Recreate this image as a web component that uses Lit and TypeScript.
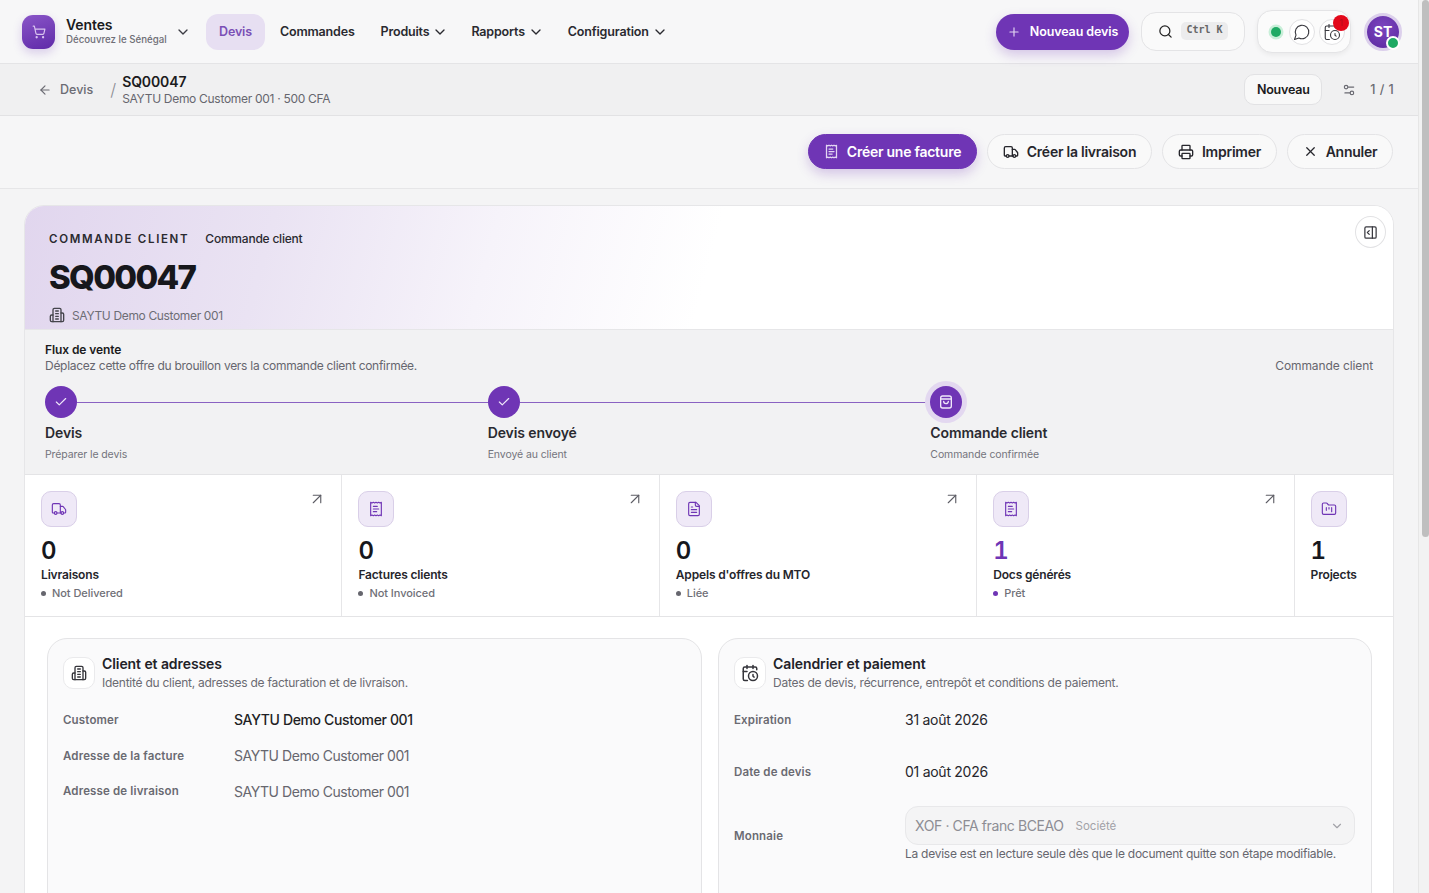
import { LitElement, html, css, svg } from "lit";
import { customElement } from "lit/decorators.js";

const ICONS: Record<string, unknown> = {
  cart: svg`<circle cx="8" cy="21" r="1"/><circle cx="19" cy="21" r="1"/><path d="M2.05 2.05h2l2.66 12.42a2 2 0 0 0 2 1.58h9.78a2 2 0 0 0 1.95-1.57l1.65-7.43H5.12"/>`,
  chevron: svg`<path d="m6 9 6 6 6-6"/>`,
  plus: svg`<path d="M5 12h14"/><path d="M12 5v14"/>`,
  search: svg`<circle cx="11" cy="11" r="8"/><path d="m21 21-4.3-4.3"/>`,
  message: svg`<path d="M7.9 20A9 9 0 1 0 4 16.1L2 22Z"/>`,
  calclock: svg`<path d="M21 7.5V6a2 2 0 0 0-2-2H5a2 2 0 0 0-2 2v14a2 2 0 0 0 2 2h3.5"/><path d="M16 2v4"/><path d="M8 2v4"/><path d="M3 10h5"/><path d="M17.5 17.5 16 16.3V14"/><circle cx="16" cy="16" r="6"/>`,
  back: svg`<path d="m12 19-7-7 7-7"/><path d="M19 12H5"/>`,
  sliders: svg`<path d="M20 7h-9"/><path d="M14 17H5"/><circle cx="17" cy="17" r="3"/><circle cx="7" cy="7" r="3"/>`,
  receipt: svg`<path d="M4 2v20l2-1 2 1 2-1 2 1 2-1 2 1 2-1 2 1V2l-2 1-2-1-2 1-2-1-2 1-2-1-2 1Z"/><path d="M14 8H8"/><path d="M16 12H8"/><path d="M13 16H8"/>`,
  truck: svg`<path d="M14 18V6a2 2 0 0 0-2-2H4a2 2 0 0 0-2 2v11a1 1 0 0 0 1 1h2"/><path d="M15 18H9"/><path d="M19 18h2a1 1 0 0 0 1-1v-3.65a1 1 0 0 0-.22-.624l-3.48-4.35A1 1 0 0 0 17.52 8H14"/><circle cx="17" cy="18" r="2"/><circle cx="7" cy="18" r="2"/>`,
  printer: svg`<path d="M6 18H4a2 2 0 0 1-2-2v-5a2 2 0 0 1 2-2h16a2 2 0 0 1 2 2v5a2 2 0 0 1-2 2h-2"/><path d="M6 9V3a1 1 0 0 1 1-1h10a1 1 0 0 1 1 1v6"/><rect x="6" y="14" width="12" height="8" rx="1"/>`,
  x: svg`<path d="M18 6 6 18"/><path d="m6 6 12 12"/>`,
  panel: svg`<rect x="3" y="3" width="18" height="18" rx="2"/><path d="M15 3v18"/><path d="m10 15-3-3 3-3"/>`,
  building: svg`<path d="M6 22V4a2 2 0 0 1 2-2h8a2 2 0 0 1 2 2v18Z"/><path d="M6 12H4a2 2 0 0 0-2 2v6a2 2 0 0 0 2 2h2"/><path d="M18 9h2a2 2 0 0 1 2 2v9a2 2 0 0 1-2 2h-2"/><path d="M10 6h4"/><path d="M10 10h4"/><path d="M10 14h4"/><path d="M10 18h4"/>`,
  check: svg`<path d="M20 6 9 17l-5-5"/>`,
  bag: svg`<rect x="4" y="3" width="16" height="18" rx="3"/><path d="M4 7.5h16"/><path d="M8.5 11a3.5 3.5 0 0 0 7 0"/>`,
  arrow: svg`<path d="M7 7h10v10"/><path d="M7 17 17 7"/>`,
  file: svg`<path d="M15 2H6a2 2 0 0 0-2 2v16a2 2 0 0 0 2 2h12a2 2 0 0 0 2-2V7Z"/><path d="M14 2v4a2 2 0 0 0 2 2h4"/><path d="M10 9H8"/><path d="M16 13H8"/><path d="M16 17H8"/>`,
  folder: svg`<path d="M4 20h16a2 2 0 0 0 2-2V8a2 2 0 0 0-2-2h-7.93a2 2 0 0 1-1.66-.9l-.82-1.2A2 2 0 0 0 7.93 3H4a2 2 0 0 0-2 2v13c0 1.1.9 2 2 2Z"/><path d="M8 10v4"/><path d="M12 10v2"/><path d="M16 10v6"/>`,
};

const ic = (name: string, cls = "i16") =>
  html`<svg class=${cls} viewBox="0 0 24 24" fill="none" stroke="currentColor" stroke-width="2" stroke-linecap="round" stroke-linejoin="round">${ICONS[name]}</svg>`;

const STATS = [
  { icon: "truck", value: "0", label: "Livraisons", meta: "Not Delivered", link: true },
  { icon: "receipt", value: "0", label: "Factures clients", meta: "Not Invoiced", link: true },
  { icon: "file", value: "0", label: "Appels d'offres du MTO", meta: "Liée", link: true },
  { icon: "receipt", value: "1", label: "Docs générés", meta: "Prêt", link: true, accent: true },
  { icon: "folder", value: "1", label: "Projects", meta: "", link: false },
];

const STEPS = [
  { icon: "check", label: "Devis", sub: "Préparer le devis" },
  { icon: "check", label: "Devis envoyé", sub: "Envoyé au client" },
  { icon: "bag", label: "Commande client", sub: "Commande confirmée", current: true },
];

@customElement("app-root")
export class AppRoot extends LitElement {
  static styles = css`
    :host { display: block; height: 893px; overflow: hidden; font-family: Inter, "Noto Sans", sans-serif; color: #1b1b20; background: #f4f4f5; font-size: 12px; }
    * { box-sizing: border-box; }
    svg { display: block; flex: none; }
    .i12 { width: 12px; height: 12px; } .i13 { width: 13px; height: 13px; } .i14 { width: 14px; height: 14px; }
    .i15 { width: 15px; height: 15px; } .i16 { width: 16px; height: 16px; } .i18 { width: 18px; height: 18px; }
    .shell { display: flex; height: 893px; }
    .main { width: 1418px; height: 893px; overflow: hidden; flex: none; }
    .gutter { flex: 1; background: #f2f2f2; padding-left: 3px; border-left: 1px solid #e6e6e6; }
    .thumb { width: 7px; height: 537px; background: #bfbfbf; border-radius: 4px; }

    header { height: 64px; background: #f7f7f8; border-bottom: 1px solid #e4e4e6; display: flex; align-items: center; padding: 0 16px 0 22px; }
    .logo { width: 33px; height: 34px; border-radius: 11px; background: linear-gradient(160deg, #8a55c8, #5f2aa8); color: #d9c4ef; display: flex; align-items: center; justify-content: center; box-shadow: 0 4px 10px rgba(111,53,181,.22); }
    .brand { margin-left: 11px; width: 109px; }
    .brand b { display: block; font-size: 14px; font-weight: 600; line-height: 15px; letter-spacing: -.1px; }
    .brand span { display: block; margin-top: 2px; font-size: 9.7px; font-weight: 500; color: #6e6e76; line-height: 12px; white-space: nowrap; }
    .brandchev { color: #3c3c44; margin-right: 15px; }
    nav { display: flex; align-items: center; font-size: 12.5px; font-weight: 600; letter-spacing: -.18px; }
    .nav-item { display: flex; align-items: center; gap: 3px; color: #2a2a30; white-space: nowrap; }
    .nav-active { width: 59px; height: 36px; border-radius: 12px; background: #e7dff2; color: #7b4fb6; justify-content: center; margin-right: 15px; }
    .n1 { margin-right: 26px; } .n2 { margin-right: 23px; } .n3 { margin-right: 24px; }
    .spacer { flex: 1; }
    .new { width: 133px; height: 36px; border-radius: 18px; background: #6f35b5; color: #fff; display: flex; align-items: center; justify-content: center; gap: 9px; font-size: 12.5px; font-weight: 600; letter-spacing: -.1px; box-shadow: 0 5px 12px rgba(111,53,181,.25); }
    .new svg { color: #e2d5f2; }
    .searchbox { margin-left: 12px; width: 104px; height: 39px; border-radius: 15px; background: #fafafa; border: 1px solid #e4e4e6; display: flex; align-items: center; padding-left: 16px; gap: 8px; color: #222; }
    kbd { height: 18px; width: 47px; border-radius: 5px; background: #ececed; font: 700 10px/16px "DejaVu Sans Mono", monospace; color: #666; text-align: center; margin-top: -1px; }
    .status { margin-left: 12px; width: 94px; height: 43px; border-radius: 15px; background: #fbfbfb; border: 1px solid #e4e4e6; box-shadow: 0 2px 5px rgba(0,0,0,.06); display: flex; align-items: center; padding-left: 13px; gap: 4px; }
    .online { width: 10px; height: 10px; border-radius: 50%; background: #1faa64; box-shadow: 0 0 0 2.5px #c9efd9; margin-right: 4px; }
    .round { width: 26px; height: 26px; border-radius: 50%; border: 1px solid #e2e2e4; background: #fff; display: flex; align-items: center; justify-content: center; color: #3a3a40; position: relative; }
    .round svg { stroke-width: 1.5; }
    .badge { position: absolute; top: -5px; right: -5px; width: 16px; height: 16px; border-radius: 50%; background: #e3081a; color: #b40e1b; font-size: 9px; line-height: 16px; text-align: center; }
    .avatar { margin-left: 13px; width: 38px; height: 38px; border-radius: 50%; border: 3px solid #dcd0ec; position: relative; }
    .avatar div { width: 32px; height: 32px; border-radius: 50%; background: radial-gradient(circle at 50% 35%, #7c46bf, #5a289f); color: #fff; font-size: 14px; font-weight: 700; display: flex; align-items: center; justify-content: center; }
    .avatar i { position: absolute; right: -1px; bottom: -2px; width: 14px; height: 14px; border-radius: 50%; background: #1faa64; border: 2px solid #fff; }

    .sub { height: 52px; background: #f0f0f1; border-bottom: 1px solid #e2e2e4; display: flex; align-items: center; padding: 0 24px 0 38px; }
    .back { display: flex; align-items: center; gap: 8px; color: #6b6b73; font-size: 12.5px; font-weight: 500; }
    .slash { color: #8c8c93; font-size: 17px; font-weight: 300; margin: 0 6px 0 17px; }
    .crumb b { display: block; font-size: 14px; font-weight: 600; line-height: 17px; letter-spacing: -.1px; }
    .crumb span { display: block; font-size: 12px; color: #66666e; line-height: 17px; letter-spacing: -.3px; }
    .nv { width: 78px; height: 31px; border-radius: 10px; background: #f8f8f8; border: 1px solid #e2e2e4; font-size: 12.5px; font-weight: 600; display: flex; align-items: center; justify-content: center; letter-spacing: -.2px; }
    .sub .sl { margin-left: 20px; color: #6a6a72; }
    .pager { margin-left: 14px; color: #6a6a72; font-weight: 500; font-size: 12.5px; letter-spacing: .4px; }

    .actions { height: 73px; background: #f6f6f7; border-bottom: 1px solid #e6e6e8; display: flex; align-items: center; justify-content: flex-end; padding: 0 25px 1px 0; gap: 10px; }
    .btn { height: 35px; border-radius: 18px; background: #f9f9f9; border: 1px solid #e4e4e6; display: flex; align-items: center; justify-content: center; gap: 8px; font-size: 14px; font-weight: 600; letter-spacing: -.25px; color: #26262c; white-space: nowrap; }
    .b1 { width: 169px; background: #6f35b5; border-color: #6f35b5; color: #fff; box-shadow: 0 5px 12px rgba(111,53,181,.25); }
    .b1 svg { color: #e2d5f2; }
    .b2 { width: 165px; } .b3 { width: 115px; } .b4 { width: 106px; }

    .page { padding: 16px 24px 0; }
    .card { background: #fff; border: 1px solid #e6e6e8; border-radius: 20px; overflow: hidden; width: 1370px; }
    .hero { height: 124px; border-bottom: 1px solid #e6e6e8; background: linear-gradient(105deg, #e1d6ee 0%, #eae3f3 18%, #f6f3fa 34%, #ffffff 50%); padding: 25px 24px 0; display: flex; flex-direction: column; position: relative; }
    .eyebrow { display: flex; align-items: center; gap: 16px; height: 15px; }
    .eyebrow b { font-size: 11.5px; font-weight: 600; letter-spacing: 1.67px; color: #2a2a30; }
    .eyebrow span { font-size: 12px; font-weight: 500; letter-spacing: -.22px; color: #2a2a30; }
    h1 { margin: 11px 0 0; font-size: 33px; line-height: 40px; font-weight: 800; letter-spacing: -1.7px; color: #17171c; }
    .cust { margin-top: 10px; display: flex; align-items: center; gap: 7px; color: #6d6d75; font-size: 12px; letter-spacing: -.35px; }
    .cust svg { color: #45454c; }
    .collapse { position: absolute; top: 10px; right: 7px; width: 31px; height: 32px; border-radius: 50%; border: 1px solid #e2e2e4; background: #fff; color: #3a3a40; display: flex; align-items: center; justify-content: center; }

    .flow { height: 145px; background: #f2f2f3; border-bottom: 1px solid #e4e4e6; padding: 12px 20px 0; }
    .flow-head { display: flex; justify-content: space-between; align-items: flex-end; }
    .flow-head b { display: block; font-size: 12px; font-weight: 600; line-height: 16px; letter-spacing: -.1px; }
    .flow-head span { display: block; font-size: 12px; color: #66666e; line-height: 16px; letter-spacing: -.28px; }
    .flow-head .tag { letter-spacing: -.1px; }
    .steps { display: grid; grid-template-columns: repeat(3, 1fr); margin-top: 12px; }
    .step-head { display: flex; align-items: center; height: 32px; }
    .dot { width: 32px; height: 32px; border-radius: 50%; background: #6f35b5; color: #f0e8fa; display: flex; align-items: center; justify-content: center; flex: none; }
    .dot.cur { box-shadow: 0 0 0 5px #e3d8f0; }
    .line { flex: 1; height: 1px; background: #8a62c2; }
    .step b { display: block; margin-top: 6px; font-size: 14px; font-weight: 600; line-height: 17px; letter-spacing: -.1px; color: #2a2a30; }
    .step span { display: block; margin-top: 7px; font-size: 10.5px; color: #74747c; line-height: 14px; letter-spacing: -.1px; }

    .stats { display: grid; grid-template-columns: repeat(4, 317.4px) 1fr; height: 142px; border-bottom: 1px solid #e4e4e6; }
    .stat { padding: 16px 16px 0; border-right: 1px solid #e6e6e8; position: relative; }
    .stat:last-child { border-right: 0; }
    .sico { width: 36px; height: 36px; border-radius: 10px; background: #efe9f7; border: 1px solid #d9cfe8; color: #6f35b5; display: flex; align-items: center; justify-content: center; }
    .sico svg { stroke-width: 1.7; }
    .go { position: absolute; top: 15px; right: 15px; color: #5c5c64; }
    .go svg { stroke-width: 1.5; }
    .val { margin-top: 10px; font: 600 24px/28px Inter, sans-serif; font-feature-settings: "tnum", "ss01"; color: #17171c; }
    .val.acc { color: #6f35b5; }
    .lab { font-size: 12px; font-weight: 600; line-height: 19px; letter-spacing: -.16px; color: #26262c; }
    .meta { display: flex; align-items: center; gap: 6px; margin-top: 2px; font-size: 11px; font-weight: 500; line-height: 15px; letter-spacing: -.05px; color: #6f6f77; }
    .meta i { width: 5px; height: 5px; border-radius: 50%; background: #66666e; }
    .meta i.acc { background: #6f35b5; }

    .cols { display: grid; grid-template-columns: 655px 654px; gap: 16px; padding: 21px 22px 0; }
    .panel { height: 400px; background: #fafafb; border: 1px solid #e4e4e6; border-radius: 20px; padding: 18px 16px 0 15px; }
    .phead { display: flex; align-items: center; gap: 7px; height: 32px; margin-bottom: 13px; }
    .pico { width: 32px; height: 32px; border-radius: 10px; background: #fff; border: 1px solid #eaeaec; color: #35353b; display: flex; align-items: center; justify-content: center; }
    .phead b { display: block; font-size: 14px; font-weight: 600; line-height: 18px; letter-spacing: -.08px; color: #222228; }
    .phead span { display: block; margin-top: 2px; font-size: 12px; color: #6a6a72; line-height: 16px; letter-spacing: -.25px; }
    .row { display: grid; grid-template-columns: 171px 1fr; align-items: center; }
    .left .row { height: 35.7px; }
    .k { font-size: 11.5px; font-weight: 600; color: #6a6a72; letter-spacing: .15px; }
    .k.low { padding-top: 4px; }
    .v { font-size: 14px; color: #66666e; letter-spacing: -.45px; }
    .v.strong { font-weight: 500; color: #1f1f25; letter-spacing: -.36px; }
    .v.date { color: #26262c; letter-spacing: -.27px; padding-bottom: 2px; }
    .r1 { height: 36px; margin-bottom: 16px; } .r2 { height: 36px; margin-bottom: 16px; }
    .select { height: 39px; border-radius: 13px; background: #f4f4f5; border: 1px solid #e8e8ea; display: flex; align-items: center; padding: 0 10px 0 9px; gap: 12px; color: #8d8d94; font-size: 14px; letter-spacing: -.4px; }
    .select small { font-size: 11.5px; color: #a2a2a8; letter-spacing: 0; }
    .select svg { margin-left: auto; color: #a2a2a8; }
    .note { margin-top: 1px; font-size: 12px; color: #66666e; line-height: 16px; letter-spacing: -.26px; white-space: nowrap; }
  `;

  render() {
    return html`
      <div class="shell">
        <div class="main">
          <header>
            <div class="logo">${ic("cart", "i14")}</div>
            <div class="brand"><b>Ventes</b><span>Découvrez le Sénégal</span></div>
            <div class="brandchev">${ic("chevron", "i16")}</div>
            <nav>
              <div class="nav-item nav-active">Devis</div>
              <div class="nav-item n1">Commandes</div>
              <div class="nav-item n2">Produits ${ic("chevron", "i16")}</div>
              <div class="nav-item n3">Rapports ${ic("chevron", "i16")}</div>
              <div class="nav-item">Configuration ${ic("chevron", "i16")}</div>
            </nav>
            <div class="spacer"></div>
            <div class="new">${ic("plus", "i14")}Nouveau devis</div>
            <div class="searchbox">${ic("search", "i15")}<kbd>Ctrl K</kbd></div>
            <div class="status">
              <div class="online"></div>
              <div class="round">${ic("message", "i18")}</div>
              <div class="round">${ic("calclock", "i18")}<span class="badge">1</span></div>
            </div>
            <div class="avatar"><div>ST</div><i></i></div>
          </header>

          <div class="sub">
            <div class="back">${ic("back", "i14")}Devis</div>
            <div class="slash">/</div>
            <div class="crumb"><b>SQ00047</b><span>SAYTU Demo Customer 001 · 500 CFA</span></div>
            <div class="spacer"></div>
            <div class="nv">Nouveau</div>
            <div class="sl">${ic("sliders", "i14")}</div>
            <div class="pager">1 / 1</div>
          </div>

          <div class="actions">
            <div class="btn b1">${ic("receipt", "i15")}Créer une facture</div>
            <div class="btn b2">${ic("truck", "i16")}Créer la livraison</div>
            <div class="btn b3">${ic("printer", "i16")}Imprimer</div>
            <div class="btn b4">${ic("x", "i15")}Annuler</div>
          </div>

          <div class="page">
            <div class="card">
              <div class="hero">
                <div class="eyebrow"><b>COMMANDE CLIENT</b><span>Commande client</span></div>
                <h1>SQ00047</h1>
                <div class="cust">${ic("building", "i16")}SAYTU Demo Customer 001</div>
                <div class="collapse">${ic("panel", "i15")}</div>
              </div>

              <div class="flow">
                <div class="flow-head">
                  <div><b>Flux de vente</b><span>Déplacez cette offre du brouillon vers la commande client confirmée.</span></div>
                  <span class="tag">Commande client</span>
                </div>
                <div class="steps">
                  ${STEPS.map((s, i) => html`
                    <div class="step">
                      <div class="step-head">
                        <div class="dot ${s.current ? "cur" : ""}">${ic(s.icon, s.current ? "i16" : "i14")}</div>
                        ${i < 2 ? html`<div class="line"></div>` : ""}
                      </div>
                      <b>${s.label}</b><span>${s.sub}</span>
                    </div>`)}
                </div>
              </div>

              <div class="stats">
                ${STATS.map((s) => html`
                  <div class="stat">
                    <div class="sico">${ic(s.icon, "i16")}</div>
                    ${s.link ? html`<div class="go">${ic("arrow", "i18")}</div>` : ""}
                    <div class="val ${s.accent ? "acc" : ""}">${s.value}</div>
                    <div class="lab">${s.label}</div>
                    ${s.meta ? html`<div class="meta"><i class=${s.accent ? "acc" : ""}></i>${s.meta}</div>` : ""}
                  </div>`)}
              </div>

              <div class="cols">
                <div class="panel left">
                  <div class="phead">
                    <div class="pico">${ic("building", "i16")}</div>
                    <div><b>Client et adresses</b><span>Identité du client, adresses de facturation et de livraison.</span></div>
                  </div>
                  <div class="row"><div class="k">Customer</div><div class="v strong">SAYTU Demo Customer 001</div></div>
                  <div class="row"><div class="k">Adresse de la facture</div><div class="v">SAYTU Demo Customer 001</div></div>
                  <div class="row"><div class="k">Adresse de livraison</div><div class="v">SAYTU Demo Customer 001</div></div>
                </div>
                <div class="panel">
                  <div class="phead">
                    <div class="pico">${ic("calclock", "i18")}</div>
                    <div><b>Calendrier et paiement</b><span>Dates de devis, récurrence, entrepôt et conditions de paiement.</span></div>
                  </div>
                  <div class="row r1"><div class="k">Expiration</div><div class="v date">31 août 2026</div></div>
                  <div class="row r2"><div class="k">Date de devis</div><div class="v date">01 août 2026</div></div>
                  <div class="row">
                    <div class="k low">Monnaie</div>
                    <div>
                      <div class="select">XOF · CFA franc BCEAO <small>Société</small>${ic("chevron", "i14")}</div>
                      <div class="note">La devise est en lecture seule dès que le document quitte son étape modifiable.</div>
                    </div>
                  </div>
                </div>
              </div>
            </div>
          </div>
        </div>
        <div class="gutter"><div class="thumb"></div></div>
      </div>
    `;
  }
}
